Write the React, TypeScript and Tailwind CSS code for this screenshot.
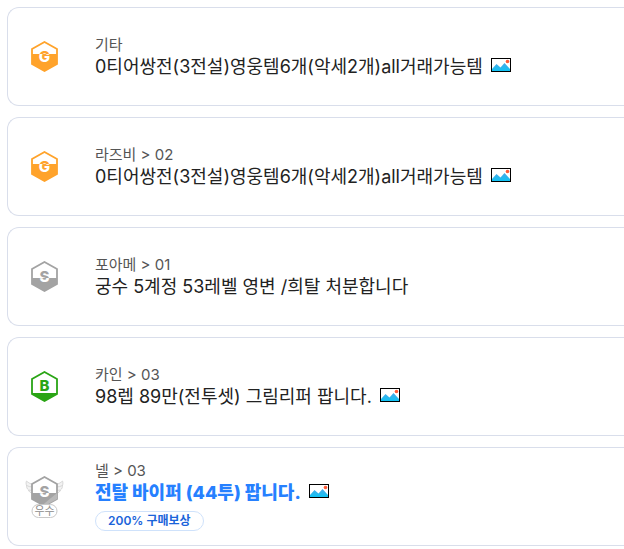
import clsx from "clsx";

type Grade = "gold" | "silver" | "bronze";

interface Trade {
  readonly id: number;
  readonly grade: Grade;
  readonly server: string;
  readonly title: string;
  readonly hasImage: boolean;
  readonly excellent?: boolean;
  readonly reward?: string;
}

const TRADES: Trade[] = [
  { id: 1, grade: "gold", server: "기타", title: "0티어쌍전(3전설)영웅템6개(악세2개)all거래가능템", hasImage: true },
  { id: 2, grade: "gold", server: "라즈비 > 02", title: "0티어쌍전(3전설)영웅템6개(악세2개)all거래가능템", hasImage: true },
  { id: 3, grade: "silver", server: "포아메 > 01", title: "궁수 5계정 53레벨 영변 /희탈 처분합니다", hasImage: false },
  { id: 4, grade: "bronze", server: "카인 > 03", title: "98렙 89만(전투셋) 그림리퍼 팝니다.", hasImage: true },
  {
    id: 5,
    grade: "silver",
    server: "넬 > 03",
    title: "전탈 바이퍼 (44투) 팝니다.",
    hasImage: true,
    excellent: true,
    reward: "200% 구매보상",
  },
];

const GRADES = {
  gold: { letter: "G", color: "#ffa32b", fill: "M1 13H26V23L13.5 30L1 23Z", split: 13, baseline: 21 },
  silver: { letter: "S", color: "#a3a3a3", fill: "M1 17H26V23L13.5 30L1 23Z", split: 17, baseline: 21 },
  bronze: { letter: "B", color: "#2aa515", fill: "M1 22H26V23L13.5 30L1 23Z", split: 22, baseline: 20 },
};

const LETTER_CLASS = "font-['Inter'] text-[15px] font-extrabold";

function GradeIcon({ grade }: { grade: Grade }) {
  const { letter, color, fill, split, baseline } = GRADES[grade];

  return (
    <svg viewBox="0 0 27 31" className="h-[31px] w-[27px]" aria-hidden="true">
      <defs>
        <clipPath id={`${grade}-lower`}>
          <rect x="0" y={split} width="27" height={31 - split} />
        </clipPath>
        <clipPath id={`${grade}-upper`}>
          <rect x="0" y="0" width="27" height={split} />
        </clipPath>
      </defs>
      <path d="M13.5 1L26 8V23L13.5 30L1 23V8Z" fill="#fff" stroke={color} strokeWidth="1.8" />
      <path d={fill} fill={color} />
      <text
        x="13.5"
        y={baseline}
        textAnchor="middle"
        fill={color}
        clipPath={`url(#${grade}-upper)`}
        className={LETTER_CLASS}
      >
        {letter}
      </text>
      <text
        x="13.5"
        y={baseline}
        textAnchor="middle"
        fill="#fff"
        clipPath={`url(#${grade}-lower)`}
        className={LETTER_CLASS}
      >
        {letter}
      </text>
    </svg>
  );
}

function Wing() {
  return (
    <g fill="#f3f3f3" stroke="#cacaca" strokeWidth="0.7">
      <path d="M8 17C5 17 4 15.5 3.5 14C2 13 1.5 11 1.5 9.5C0.8 7.5 1 6 1.5 5C3.5 7 6 8 8 8.5Z" />
      <path d="M1.5 9.5C3.5 10.5 5.5 11 8 11M3.5 14C5 14.4 6.5 14.4 8 14" fill="none" />
    </g>
  );
}

function ExcellentIcon() {
  return (
    <svg viewBox="0 0 39 42" className="h-[42px] w-[39px]" aria-hidden="true">
      <defs>
        <clipPath id="excellent-lower">
          <rect x="6" y="17" width="27" height="15" />
        </clipPath>
        <clipPath id="excellent-upper">
          <rect x="6" y="0" width="27" height="17" />
        </clipPath>
      </defs>
      <Wing />
      <g transform="translate(39 0) scale(-1 1)">
        <Wing />
      </g>
      <path d="M19.5 1L32 8V23L19.5 30L7 23V8Z" fill="#fff" stroke="#a3a3a3" strokeWidth="1.8" />
      <path d="M7 17H32V23L19.5 30L7 23Z" fill="#a3a3a3" />
      <path d="M32 17V23L19.5 30L17.5 29Z" fill="#b9b9b9" />
      <text
        x="19.5"
        y="21"
        textAnchor="middle"
        fill="#a3a3a3"
        clipPath="url(#excellent-upper)"
        className={LETTER_CLASS}
      >
        S
      </text>
      <text
        x="19.5"
        y="21"
        textAnchor="middle"
        fill="#fff"
        clipPath="url(#excellent-lower)"
        className={LETTER_CLASS}
      >
        S
      </text>
      <rect x="7" y="28.5" width="25" height="13" rx="6.5" fill="#fff" stroke="#c8c8c8" />
      <text x="19.5" y="39" textAnchor="middle" fill="#8c8c8c" className="text-[11px]">
        우수
      </text>
    </svg>
  );
}

function PictureIcon() {
  return (
    <svg viewBox="0 0 20 14" className="mb-[3px] h-3.5 w-5 shrink-0" role="img" aria-label="이미지">
      <defs>
        <linearGradient id="hills" x1="0" y1="0" x2="0" y2="1">
          <stop offset="0" stopColor="#4aa8e8" />
          <stop offset="1" stopColor="#10c4f4" />
        </linearGradient>
      </defs>
      <rect x="0.5" y="0.5" width="19" height="13" fill="#fff" stroke="#000" />
      <path d="M1 13V11L5.5 6L9.5 9.5L13.5 5L19 11V13Z" fill="url(#hills)" />
      <circle cx="16.5" cy="3.5" r="1.8" fill="#ff5a36" />
    </svg>
  );
}

function TradeCard({ trade }: { trade: Trade }) {
  return (
    <li className="flex min-h-[99px] items-center rounded-l-xl border border-r-0 border-[#d9deeb] bg-white">
      <div className="flex w-[73px] shrink-0 justify-center">
        {trade.excellent ? <ExcellentIcon /> : <GradeIcon grade={trade.grade} />}
      </div>
      <div className="ml-3.5 min-w-0">
        <p className="text-[15px] leading-5 text-[#555]">{trade.server}</p>
        <div className="flex items-center gap-2">
          <a
            href="#"
            className={clsx(
              "text-lg leading-6 whitespace-nowrap",
              trade.excellent ? "font-extrabold text-[#2680ff]" : "text-[#222]"
            )}
          >
            {trade.title}
          </a>
          {trade.hasImage && <PictureIcon />}
        </div>
        {trade.reward && (
          <span className="mt-1.5 mb-0.5 flex h-5 w-fit items-center rounded-full border border-[#cfe2fb] px-3 text-xs font-semibold text-[#1b64da]">
            {trade.reward}
          </span>
        )}
      </div>
    </li>
  );
}

export default function App() {
  return (
    <main className="overflow-hidden bg-white pt-[7px] pl-[7px] font-['Inter','Noto_Sans_CJK_KR',sans-serif]">
      <ul className="flex flex-col gap-[11px]">
        {TRADES.map((trade) => (
          <TradeCard key={trade.id} trade={trade} />
        ))}
      </ul>
    </main>
  );
}
